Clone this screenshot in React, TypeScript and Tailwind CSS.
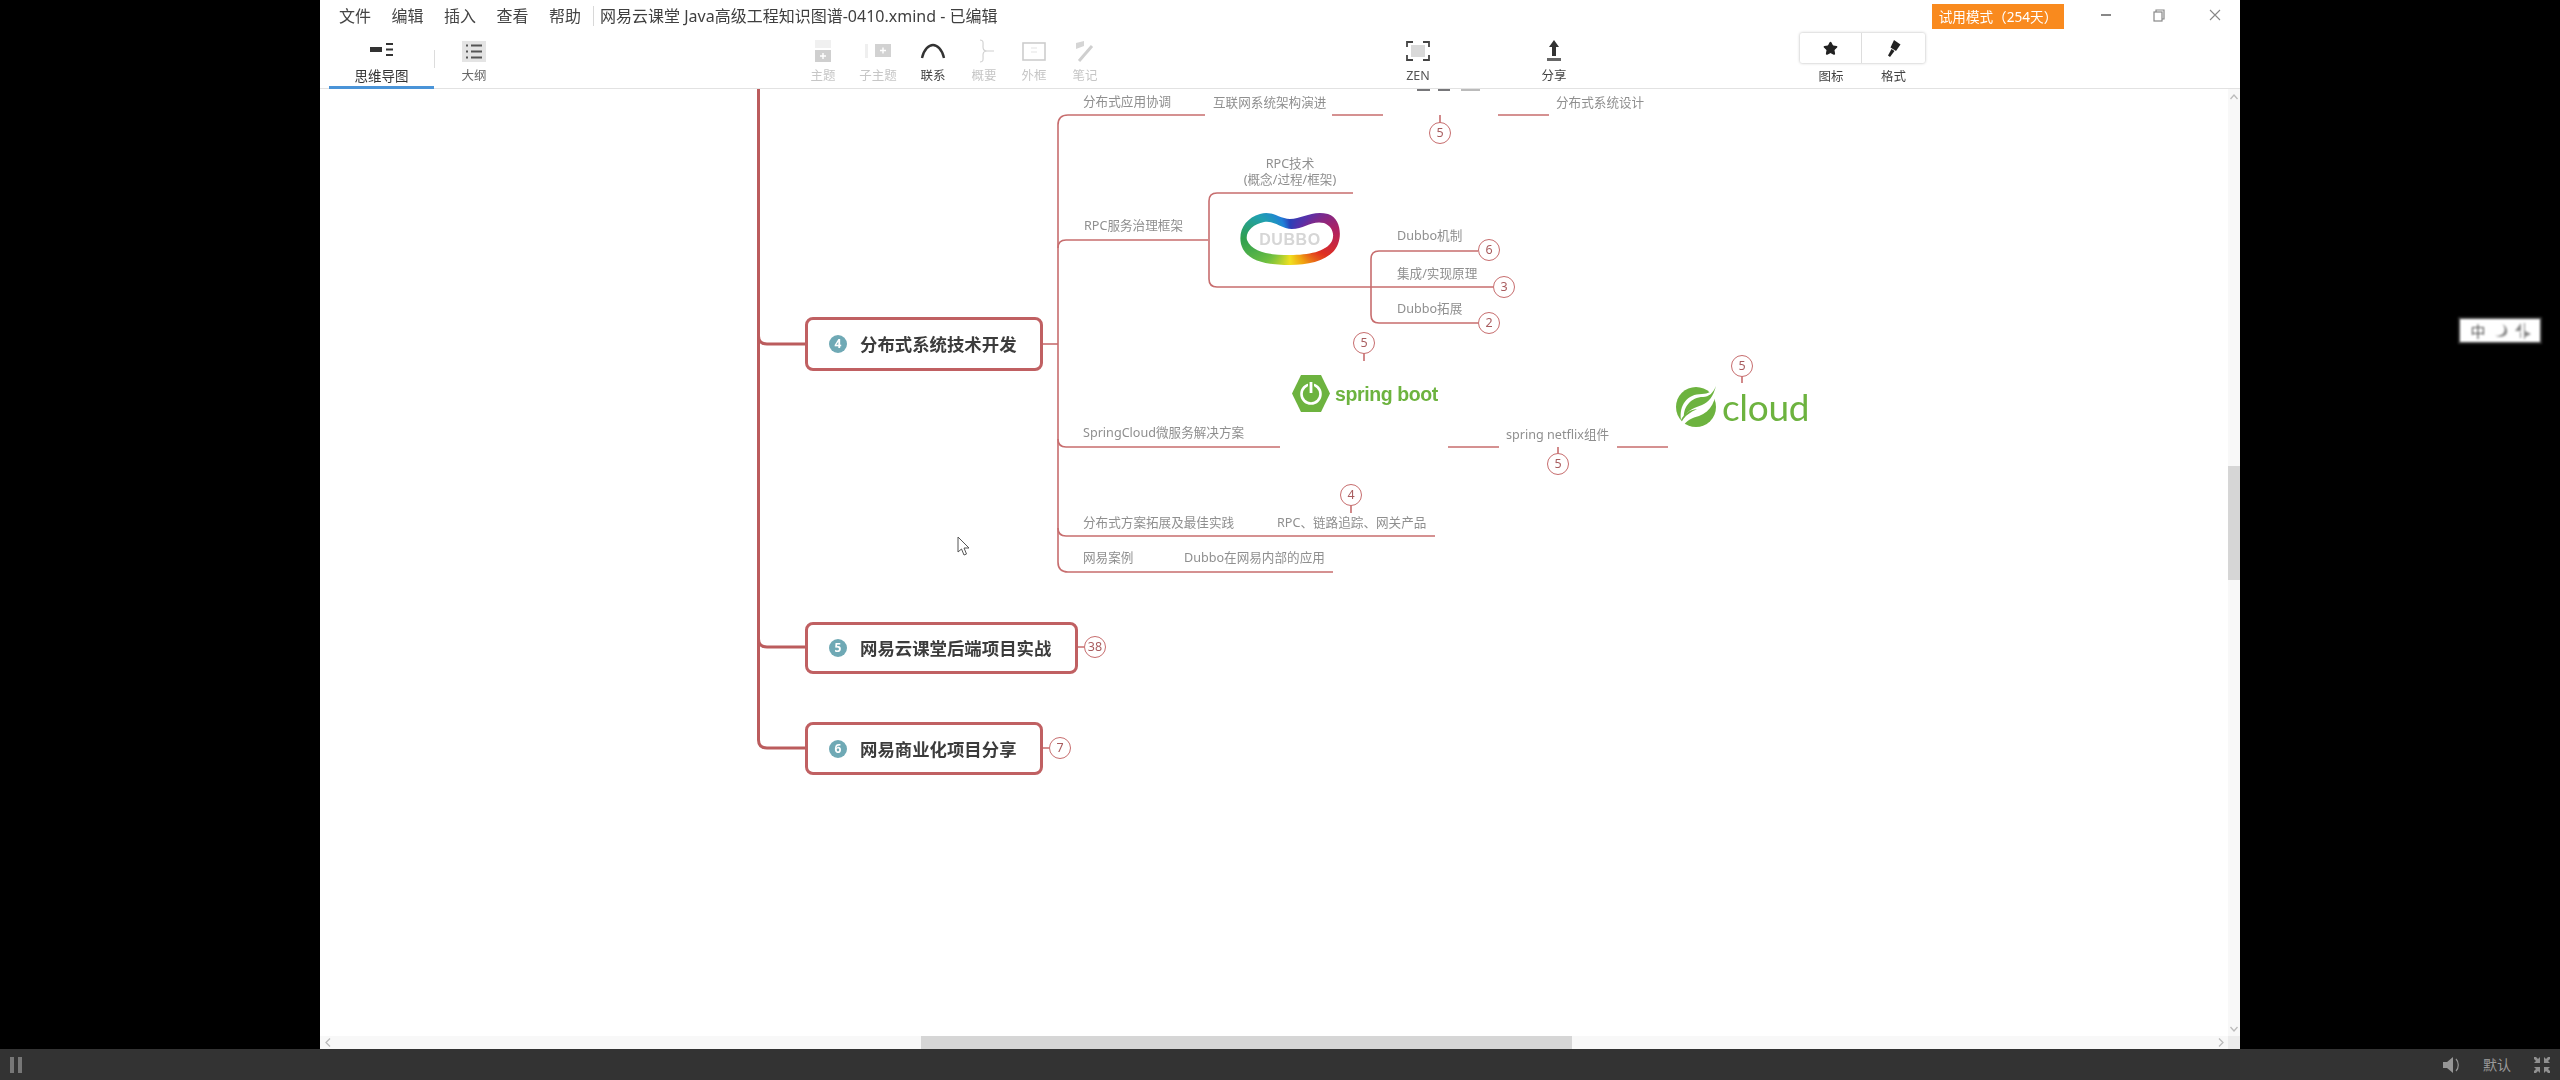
import React from "react";
import { Star } from "lucide-react";

const CJK = "font-['Noto_Sans','Noto_Sans_CJK_SC',sans-serif]";

function ToolItem({ w, ml, label, tone, icon }: { w: string; ml?: string; label: string; tone: string; icon: React.ReactNode }) {
  return (
    <div className={`flex flex-col items-center pt-[7px] ${w} ${ml ?? ""}`}>
      <div className="h-[26px] flex items-center justify-center">{icon}</div>
      <div className={`mt-[3px] h-[18px] leading-[18px] text-[12.5px] whitespace-nowrap ${tone}`}>{label}</div>
    </div>
  );
}

const nodes = [
  { t: "分布式应用协调", c: "left-[763px] top-[3px]" },
  { t: "互联网系统架构演进", c: "left-[893px] top-[4px]" },
  { t: "分布式系统设计", c: "left-[1236px] top-[4px]" },
  { t: "RPC服务治理框架", c: "left-[764px] top-[127px]" },
  { t: "Dubbo机制", c: "left-[1077px] top-[137px]" },
  { t: "集成/实现原理", c: "left-[1077px] top-[175px]" },
  { t: "Dubbo拓展", c: "left-[1077px] top-[210px]" },
  { t: "SpringCloud微服务解决方案", c: "left-[763px] top-[334px]" },
  { t: "spring netflix组件", c: "left-[1186px] top-[336px]" },
  { t: "分布式方案拓展及最佳实践", c: "left-[763px] top-[424px]" },
  { t: "RPC、链路追踪、网关产品", c: "left-[957px] top-[424px]" },
  { t: "网易案例", c: "left-[763px] top-[459px]" },
  { t: "Dubbo在网易内部的应用", c: "left-[864px] top-[459px]" },
];

const badges = [
  { t: "5", c: "left-[1109px] top-[33px]" },
  { t: "6", c: "left-[1158px] top-[150px]" },
  { t: "3", c: "left-[1173px] top-[187px]" },
  { t: "2", c: "left-[1158px] top-[223px]" },
  { t: "5", c: "left-[1033px] top-[243px]" },
  { t: "5", c: "left-[1227px] top-[364px]" },
  { t: "5", c: "left-[1411px] top-[266px]" },
  { t: "4", c: "left-[1020px] top-[395px]" },
  { t: "38", c: "left-[764px] top-[547px]" },
  { t: "7", c: "left-[729px] top-[648px]" },
];

const topics = [
  { n: "4", t: "分布式系统技术开发", c: "left-[485px] top-[228px] w-[238px] h-[54px]" },
  { n: "5", t: "网易云课堂后端项目实战", c: "left-[485px] top-[533px] w-[273px] h-[52px]" },
  { n: "6", t: "网易商业化项目分享", c: "left-[485px] top-[633px] w-[238px] h-[53px]" },
];

function Connectors() {
  return (
    <svg className="absolute left-0 top-0" width="1900" height="947" fill="none">
      <g stroke="#bb5c5d" strokeWidth="3">
        <path d="M438.5 0V651Q438.5 659 447 659H486" />
        <path d="M438.5 247Q438.5 255 447 255H486" />
        <path d="M438.5 550Q438.5 558 447 558H486" />
      </g>
      <g stroke="#c76d6e" strokeWidth="1.6">
        <path d="M723 255H738" />
        <path d="M885 26H748Q738 26 738 36V473Q738 483 748 483H1013" />
        <path d="M738 159Q738 151 746 151H888" />
        <path d="M738 350Q738 358 746 358H960" />
        <path d="M738 439Q738 447 746 447H1115" />
        <path d="M1012 26H1063M1178 26H1229M1128 358H1179M1297 358H1348" />
        <path d="M1033 104H897Q889 104 889 112V190Q889 198 897 198H1173" />
        <path d="M1158 162H1059Q1051 162 1051 170V226Q1051 234 1059 234H1158" />
        <path d="M1120 26V34M1044 264V272M1238 358V365M1422 287V294M1031 416V424M757 558H764M723 659H729" />
      </g>
      <g stroke="#77777a" strokeWidth="2">
        <path d="M1097 1H1110M1118 1H1130" />
        <path d="M1141 1H1160" stroke="#bbbbbb" />
      </g>
    </svg>
  );
}

function DubboLogo() {
  return (
    <div className="absolute left-[918px] top-[121px] w-[104px] h-[57px]">
      <svg width="104" height="57" viewBox="0 0 104 57" fill="none">
        <defs>
          <clipPath id="dubboOuter">
            <path d="M22 4C34 0 42 9 52 9C64 9 74 0 90 4C102 8 104 24 100 34C94 50 72 55 52 55C30 55 8 52 3 34C0 20 8 8 22 4Z" />
          </clipPath>
        </defs>
        <foreignObject x="0" y="0" width="104" height="57" clipPath="url(#dubboOuter)">
          <div className="w-[104px] h-[57px] bg-[conic-gradient(from_0deg_at_50%_50%,#2a40b8_0deg,#5a30a8_40deg,#b02060_80deg,#e03020_115deg,#f0a010_150deg,#f0e020_180deg,#70c040_225deg,#30a050_270deg,#20a0b0_305deg,#2080d8_335deg,#2a40b8_360deg)]" />
        </foreignObject>
        <path d="M26 12C36 10 44 19 54 19C66 19 74 10 86 13C94 16 97 24 94 31C88 42 70 45 52 45C34 45 14 43 9 30C7 22 15 14 26 12Z" fill="#ffffff" />
      </svg>
      <div className="absolute left-0 top-[20px] w-full text-center text-[16px] leading-[20px] font-bold tracking-[0.6px] text-[#d6d6d6] font-['Liberation_Sans',sans-serif]">DUBBO</div>
    </div>
  );
}

function SpringBoot() {
  return (
    <div className="absolute left-[972px] top-[286px] flex items-center gap-[5px]">
      <svg width="38" height="37" viewBox="0 0 38 37">
        <path d="M9 0H29L38 18.5L29 37H9L0 18.5Z" fill="#6db33f" />
        <circle cx="19" cy="19" r="9.5" fill="none" stroke="#fff" strokeWidth="2.6" />
        <path d="M19 6V18" stroke="#6db33f" strokeWidth="6" />
        <path d="M19 7V18" stroke="#fff" strokeWidth="2.8" />
      </svg>
      <div className="text-[19.5px] leading-[28px] font-bold text-[#6db33f] whitespace-nowrap font-['Liberation_Sans',sans-serif] tracking-[-0.4px]">spring boot</div>
    </div>
  );
}

function CloudLogo() {
  return (
    <div className="absolute left-[1355px] top-[296px] flex items-center gap-[5px]">
      <svg width="42" height="43" viewBox="0 0 42 43">
        <circle cx="21" cy="22" r="20" fill="#6db33f" />
        <path d="M41 1C42 14 36 27 24 31C17 33 12 35 8 41L6 38C10 30 16 27 22 24C14 25 9 29 6 35C4 20 12 9 27 9C33 9 38 6 41 1Z" fill="#fff" />
        <path d="M41 1C38 12 34 17 27 20C20 23 13 24 9 33C8 22 16 12 28 12C34 12 38 8 41 1Z" fill="#6db33f" />
      </svg>
      <div className="text-[37px] leading-[40px] text-[#6db33f] font-['Lato',sans-serif] whitespace-nowrap -tracking-[0.3px]">cloud</div>
    </div>
  );
}

function MindMap() {
  return (
    <div className={`relative flex-1 bg-white overflow-hidden ${CJK}`}>
      <Connectors />
      {nodes.map((n) => (
        <div key={n.t} className={`absolute h-5 leading-5 text-[12.6px] text-[#8f8f8f] whitespace-nowrap ${n.c}`}>{n.t}</div>
      ))}
      <div className="absolute left-[890px] top-[67px] w-[160px] text-center text-[12.6px] leading-4 text-[#8f8f8f]">
        <div>RPC技术</div>
        <div>(概念/过程/框架)</div>
      </div>
      {topics.map((t) => (
        <div key={t.n} className={`absolute flex items-center gap-[13px] pl-[21px] border-[3px] border-[#c06062] rounded-[8px] bg-white ${t.c}`}>
          <div className="w-[18px] h-[18px] rounded-full bg-[#6fa9b5] text-white text-[12px] font-bold leading-[18px] text-center shrink-0">{t.n}</div>
          <div className="text-[17.4px] leading-6 font-bold text-[#3c3c3c] whitespace-nowrap">{t.t}</div>
        </div>
      ))}
      {badges.map((b) => (
        <div key={b.c} className={`absolute w-[22px] h-[22px] rounded-full border-[1.5px] border-[#c76d6e] bg-white text-center text-[12.5px] leading-[19px] text-[#a85c5e] ${b.c}`}>{b.t}</div>
      ))}
      <DubboLogo />
      <SpringBoot />
      <CloudLogo />
      <svg className="absolute left-[637px] top-[447px]" width="14" height="21" viewBox="0 0 14 21">
        <path d="M1 1V16L4.5 13L7 19L9.5 18L7 12H12Z" fill="#fff" stroke="#555" strokeWidth="1" />
      </svg>
    </div>
  );
}

function TopBar() {
  return (
    <div className={`h-[31px] flex items-start text-[#444] text-[16px] ${CJK}`}>
      <div className="flex gap-[20.5px] ml-[19px] mt-[4px] leading-[24px]">
        <span>文件</span>
        <span>编辑</span>
        <span>插入</span>
        <span>查看</span>
        <span>帮助</span>
      </div>
      <div className="w-px h-[20px] bg-[#d8d8d8] ml-[12px] mt-[6px]" />
      <div className="ml-[6px] mt-[4px] leading-[24px] whitespace-nowrap text-[#3f3f3f]">网易云课堂 Java高级工程知识图谱-0410.xmind - 已编辑</div>
      <div className="ml-auto mt-[4px] mr-[17px] w-[132px] h-[25px] bg-[#f98a1e] text-white text-[13.6px] leading-[25px] text-center whitespace-nowrap">试用模式（254天）</div>
      <div className="flex">
        <div className="w-[50px] h-[30px] flex items-center justify-center">
          <div className="w-[10px] h-[1.5px] bg-[#888]" />
        </div>
        <div className="w-[50px] h-[30px] flex items-center justify-center ml-[3px] mr-[6px]">
          <svg width="12" height="13" viewBox="0 0 12 13" fill="none" stroke="#888" strokeWidth="1.2">
            <rect x="1" y="3" width="8" height="9" />
            <path d="M3 3V1H11V10H9" />
          </svg>
        </div>
        <div className="w-[50px] h-[30px] flex items-center justify-center">
          <svg width="12" height="12" viewBox="0 0 12 12" fill="none" stroke="#888" strokeWidth="1.1">
            <path d="M1 1L11 11M11 1L1 11" />
          </svg>
        </div>
      </div>
    </div>
  );
}

function Toolbar() {
  const off = "text-[#c6c6c6]";
  const on = "text-[#444]";
  return (
    <div className={`h-[58px] flex items-start border-b border-[#e2e2e2] ${CJK}`}>
      <div className="ml-[9px] w-[105px] h-[58px] border-b-[3px] border-[#4a94d8] flex flex-col items-center">
        <svg className="mt-[12px]" width="24" height="13" viewBox="0 0 24 13" fill="#333">
          <rect x="0" y="4" width="12" height="5" />
          <rect x="16" y="0" width="7" height="2" />
          <rect x="16" y="5.5" width="7" height="2" />
          <rect x="16" y="11" width="7" height="2" />
        </svg>
        <div className="mt-[11px] h-[18px] leading-[18px] text-[13.5px] text-[#333] whitespace-nowrap">思维导图</div>
      </div>
      <div className="w-px h-[18px] bg-[#dcdcdc] mt-[19px]" />
      <div className="ml-[9px]">
        <ToolItem w="w-[60px]" label="大纲" tone="text-[#666]" icon={
          <svg width="24" height="21" viewBox="0 0 24 21">
            <rect width="24" height="21" fill="#e4e4e4" />
            <path d="M9 4.5H20M9 10.5H20M9 16.5H20M4 4.5H6M4 10.5H6M4 16.5H6" stroke="#555" strokeWidth="2" />
          </svg>
        } />
      </div>
      <ToolItem w="w-[52px]" ml="ml-[293px]" label="主题" tone={off} icon={
        <svg width="18" height="22" viewBox="0 0 18 22">
          <rect x="1" y="0" width="16" height="8" fill="#f0f0f0" />
          <rect x="1" y="10" width="16" height="12" fill="#cfcfcf" />
          <path d="M9 13V19M6 16H12" stroke="#fff" strokeWidth="1.4" />
        </svg>
      } />
      <ToolItem w="w-[58px]" label="子主题" tone={off} icon={
        <svg width="26" height="14" viewBox="0 0 26 14">
          <rect x="0" y="0" width="3" height="14" fill="#efefef" />
          <rect x="10" y="0" width="16" height="13" fill="#d2d2d2" />
          <path d="M18 3.5V9.5M15 6.5H21" stroke="#fff" strokeWidth="1.4" />
        </svg>
      } />
      <ToolItem w="w-[52px]" label="联系" tone={on} icon={
        <svg width="26" height="16" viewBox="0 0 26 16" fill="none">
          <path d="M2 15C4 6 9 2 13 2C17 2 22 6 24 15" stroke="#333" strokeWidth="2.4" />
        </svg>
      } />
      <ToolItem w="w-[50px]" label="概要" tone={off} icon={
        <svg width="24" height="24" viewBox="0 0 24 24" fill="none">
          <path d="M8 1C12 1 11 4 11 8C11 11 12 12 15 12C12 12 11 13 11 16C11 20 12 23 8 23M15 12H22" stroke="#cfcfcf" strokeWidth="1.1" />
        </svg>
      } />
      <ToolItem w="w-[50px]" label="外框" tone={off} icon={
        <svg width="24" height="19" viewBox="0 0 24 19" fill="none">
          <rect x="1" y="1" width="22" height="17" stroke="#cdcdcd" strokeWidth="1.6" />
          <path d="M9 6H15M9 10H15" stroke="#e4e4e4" strokeWidth="1.2" />
        </svg>
      } />
      <ToolItem w="w-[52px]" label="笔记" tone={off} icon={
        <svg width="20" height="21" viewBox="0 0 20 21" fill="none">
          <path d="M1 2L9 0V5L1 8Z" fill="#d5d5d5" />
          <path d="M17 5L4 20" stroke="#cfcfcf" strokeWidth="3" />
        </svg>
      } />
      <ToolItem w="w-[60px]" ml="ml-[277px]" label="ZEN" tone="text-[#555]" icon={
        <svg width="24" height="20" viewBox="0 0 24 20" fill="none">
          <rect x="5" y="4" width="14" height="12" fill="#d9d9d9" />
          <path d="M1 6V1H7M17 1H23V6M23 14V19H17M7 19H1V14" stroke="#444" strokeWidth="1.8" />
        </svg>
      } />
      <ToolItem w="w-[60px]" ml="ml-[76px]" label="分享" tone="text-[#444]" icon={
        <svg width="16" height="22" viewBox="0 0 16 22" fill="#333">
          <path d="M8 0L13 7H10V16H6V7H3Z" />
          <rect x="1" y="18" width="14" height="3" fill="#666" />
        </svg>
      } />
      <div className="ml-[216px] w-[125px] flex flex-col pt-[2px]">
        <div className="h-[30px] flex bg-white rounded-[2px] shadow-[0_0_3px_rgba(0,0,0,0.3)]">
          <div className="w-[62px] flex items-center justify-center border-r border-[#dddddd]">
            <Star size={15} fill="#222" stroke="#222" />
          </div>
          <div className="flex-1 flex items-center justify-center">
            <svg width="14" height="17" viewBox="0 0 14 17" fill="#222">
              <path d="M7 0L13.5 4.5L9 11L3.5 7.5Z" />
              <path d="M4.5 9L7.5 11L3 17L1 15.5Z" />
            </svg>
          </div>
        </div>
        <div className="flex mt-[5px] h-[18px] leading-[18px] text-[12.5px] text-[#444]">
          <div className="w-[62px] text-center">图标</div>
          <div className="flex-1 text-center">格式</div>
        </div>
      </div>
    </div>
  );
}

function VScroll() {
  return (
    <div className="w-[12px] bg-[#f8f8f8] flex flex-col items-center relative">
      <svg className="absolute left-[2px] top-[5px]" width="8" height="6" viewBox="0 0 8 6" fill="none">
        <path d="M0.5 5L4 1L7.5 5" stroke="#bbb" strokeWidth="1.3" />
      </svg>
      <div className="mt-[377px] w-full h-[114px] bg-[#d6d6d6]" />
      <svg className="absolute left-[2px] bottom-[4px]" width="8" height="6" viewBox="0 0 8 6" fill="none">
        <path d="M0.5 1L4 5L7.5 1" stroke="#bbb" strokeWidth="1.3" />
      </svg>
    </div>
  );
}

function HScroll() {
  return (
    <div className="h-[13px] flex">
      <div className="flex-1 bg-[#f8f8f8] relative">
        <svg className="absolute left-[5px] top-[2px]" width="6" height="9" viewBox="0 0 6 9" fill="none">
          <path d="M5 0.5L1 4.5L5 8.5" stroke="#bbb" strokeWidth="1.3" />
        </svg>
        <div className="ml-[601px] w-[651px] h-full bg-[#d6d6d6]" />
        <svg className="absolute right-[4px] top-[2px]" width="6" height="9" viewBox="0 0 6 9" fill="none">
          <path d="M1 0.5L5 4.5L1 8.5" stroke="#bbb" strokeWidth="1.3" />
        </svg>
      </div>
      <div className="w-[12px] bg-[#ececec]" />
    </div>
  );
}

function BottomBar() {
  return (
    <div className={`h-[31px] bg-[#333333] flex items-center shrink-0 ${CJK}`}>
      <div className="ml-[10px] flex gap-[4px]">
        <div className="w-[4px] h-[16px] bg-[#777]" />
        <div className="w-[4px] h-[16px] bg-[#777]" />
      </div>
      <svg className="ml-auto" width="18" height="16" viewBox="0 0 18 16" fill="#969696">
        <path d="M0 5H4L10 0V16L4 11H0Z" />
        <path d="M13 2C16 5 16 11 13 14" fill="none" stroke="#969696" strokeWidth="1.2" />
      </svg>
      <div className="ml-[22px] text-[14px] leading-5 text-[#9a9a9a]">默认</div>
      <svg className="ml-[23px] mr-[10px]" width="16" height="16" viewBox="0 0 16 16" fill="#8f8f8f">
        <path d="M0 0L2 0L4 2L6 0V6H0L2 4L0 2Z" />
        <path d="M16 0H14L12 2L10 0V6H16L14 4L16 2Z" />
        <path d="M0 16H2L4 14L6 16V10H0L2 12L0 14Z" />
        <path d="M16 16H14L12 14L10 16V10H16L14 12L16 14Z" />
      </svg>
    </div>
  );
}

function ImeWidget() {
  return (
    <div className={`absolute left-[2460px] top-[319px] w-[80px] h-[23px] bg-white flex items-center justify-center gap-[4px] blur-[1px] shadow-[0_0_0_2px_#333] ${CJK}`}>
      <div className="w-[20px] text-center text-[15px] leading-5 text-[#555]">中</div>
      <svg width="18" height="16" viewBox="0 0 20 18" fill="#888">
        <path d="M11 1C15 4 15 9 12 12C9 14 6 15 3 14C8 17 17 16 17 9C17 5 14 2 11 1Z" />
      </svg>
      <svg width="18" height="18" viewBox="0 0 18 18" fill="#888">
        <path d="M7 1V9H1Z" />
        <path d="M7 10V16H6V10Z" />
        <path d="M10 1H11V17H10Z" />
        <path d="M11 9L17 12L11 15Z" />
      </svg>
    </div>
  );
}

export default function App() {
  return (
    <div className="relative w-[2560px] h-[1080px] bg-black overflow-hidden flex flex-col">
      <div className="flex-1 flex justify-center min-h-0">
        <div className="w-[1920px] bg-white flex flex-col blur-[0.7px]">
          <TopBar />
          <Toolbar />
          <div className="flex-1 flex min-h-0">
            <MindMap />
            <VScroll />
          </div>
          <HScroll />
        </div>
      </div>
      <BottomBar />
      <ImeWidget />
    </div>
  );
}
